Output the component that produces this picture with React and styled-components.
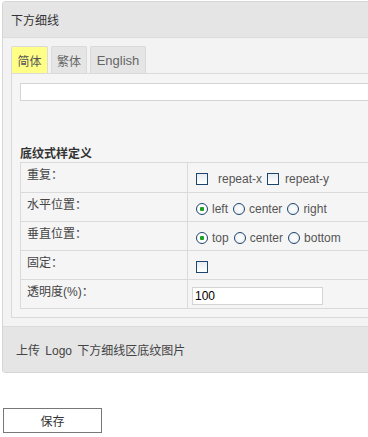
import React, { useState } from "react"
import styled, { createGlobalStyle } from "styled-components"

const GlobalStyle = createGlobalStyle`
  html, body {
    margin: 0;
    padding: 0;
    background: #fff;
    overflow: hidden;
  }
  body {
    font-family: "Liberation Sans", Arial, "Noto Sans CJK SC", sans-serif;
    font-size: 12px;
    color: #333;
  }
`

const Page = styled.div`
  width: 368px;
  height: 437px;
  overflow: hidden;
`

const Panel = styled.div`
  width: 420px;
  margin: 1px 0 0 2px;
  border: 1px solid #d6d6d6;
  border-radius: 3px;
  background: #f3f3f3;
  box-sizing: border-box;
`

const PanelHeader = styled.div`
  height: 35px;
  display: flex;
  align-items: center;
  padding-left: 8px;
  background: #e5e5e5;
  border-bottom: 1px solid #dcdcdc;
  color: #333;
`

const PanelBody = styled.div`
  padding: 8px 0 8px 8px;
`

const Tabs = styled.div`
  display: flex;
  gap: 3px;
  align-items: flex-end;
`

const Tab = styled.div`
  height: 27px;
  width: ${(p) => p.$w}px;
  display: flex;
  align-items: center;
  justify-content: center;
  box-sizing: border-box;
  border: 1px solid #dadada;
  border-bottom: none;
  border-radius: 2px 2px 0 0;
  background: ${(p) => (p.$active ? "#ffff88" : "#e5e5e5")};
  color: ${(p) => (p.$active ? "#555" : "#666")};
  font-size: ${(p) => (p.$en ? "13px" : "12px")};
  cursor: pointer;
`

const TabPane = styled.div`
  border: 1px solid #dadada;
  background: #f5f5f5;
  padding: 9px 0 8px 8px;
`

const TextBox = styled.input`
  display: block;
  box-sizing: border-box;
  height: 18px;
  width: ${(p) => p.$w || "100%"};
  border: 1px solid #d4d4d4;
  background: #fff;
  font-family: "Liberation Sans", Arial, sans-serif;
  font-size: 12px;
  color: #000;
  padding: 0 2px;
  outline: none;
`

const SectionTitle = styled.div`
  margin-top: 46px;
  height: 15px;
  line-height: 15px;
  font-weight: bold;
  color: #333;
`

const Table = styled.div`
  border: 1px solid #dadada;
  border-right: none;
`

const Row = styled.div`
  display: grid;
  grid-template-columns: 167px 1fr;
  height: 29px;
  box-sizing: border-box;
  & + & {
    border-top: 1px solid #dadada;
  }
`

const Label = styled.div`
  padding: 5px 0 0 6px;
  color: #444;
  border-right: 1px solid #dadada;
  line-height: 14px;
`

const Value = styled.div`
  display: flex;
  align-items: center;
  padding: 3px 0 0 8px;
  color: #555;
  font-size: 12px;
`

const Check = styled.span`
  width: 12px;
  height: 12px;
  box-sizing: border-box;
  border: 1px solid #1d456e;
  background: linear-gradient(#e8ecf0, #fff);
  margin-right: ${(p) => p.$gap}px;
  flex-shrink: 0;
`

const Radio = styled.span`
  width: 12px;
  height: 12px;
  box-sizing: border-box;
  border: 1px solid #1d456e;
  border-radius: 50%;
  background: radial-gradient(circle, ${(p) => (p.$on ? "#21a121 0 2px, #fff 2.5px" : "#fff 0, #e6eaee 100%")});
  margin-right: 4px;
  flex-shrink: 0;
`

const Opt = styled.span`
  margin-right: 5px;
  white-space: nowrap;
`

const PanelFooter = styled.div`
  height: 45px;
  display: flex;
  align-items: center;
  padding-left: 13px;
  background: #e5e5e5;
  border-top: 1px solid #dcdcdc;
  color: #444;
  word-spacing: 2px;
`

const SaveButton = styled.button`
  display: flex;
  align-items: center;
  justify-content: center;
  margin: 35px 0 0 3px;
  width: 99px;
  height: 25px;
  border: 1px solid #777;
  background: #fff;
  color: #333;
  font-family: "Liberation Sans", Arial, "Noto Sans CJK SC", sans-serif;
  font-size: 12px;
  padding: 0;
`

const tabs = [
  { key: "sc", label: "简体", w: 37 },
  { key: "tc", label: "繁体", w: 36 },
  { key: "en", label: "English", w: 56, en: true },
]

const RadioRow = ({ options, value }) => (
  <Value>
    {options.map((o) => (
      <React.Fragment key={o}>
        <Radio $on={o === value} />
        <Opt>{o}</Opt>
      </React.Fragment>
    ))}
  </Value>
)

const App = () => {
  const [tab, setTab] = useState("sc")

  return (
    <Page>
      <GlobalStyle />
      <Panel>
        <PanelHeader>下方细线</PanelHeader>
        <PanelBody>
          <Tabs>
            {tabs.map((t) => (
              <Tab
                key={t.key}
                $w={t.w}
                $en={t.en}
                $active={tab === t.key}
                onClick={() => setTab(t.key)}
              >
                {t.label}
              </Tab>
            ))}
          </Tabs>
          <TabPane>
            <TextBox />
            <SectionTitle>底纹式样定义</SectionTitle>
            <Table>
              <Row>
                <Label>重复：</Label>
                <Value>
                  <Check $gap={10} />
                  <Opt>repeat-x</Opt>
                  <Check $gap={6} />
                  <Opt>repeat-y</Opt>
                </Value>
              </Row>
              <Row>
                <Label>水平位置：</Label>
                <RadioRow options={["left", "center", "right"]} value="left" />
              </Row>
              <Row>
                <Label>垂直位置：</Label>
                <RadioRow options={["top", "center", "bottom"]} value="top" />
              </Row>
              <Row>
                <Label>固定：</Label>
                <Value>
                  <Check $gap={0} />
                </Value>
              </Row>
              <Row>
                <Label>透明度(%)：</Label>
                <Value style={{ paddingLeft: 4 }}>
                  <TextBox $w="131px" defaultValue="100" />
                </Value>
              </Row>
            </Table>
          </TabPane>
        </PanelBody>
        <PanelFooter>上传 Logo 下方细线区底纹图片</PanelFooter>
      </Panel>
      <SaveButton>保存</SaveButton>
    </Page>
  )
}

export default App
